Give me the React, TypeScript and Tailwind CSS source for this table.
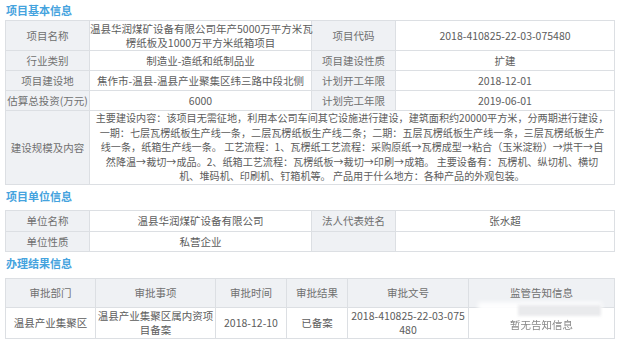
import React from "react";

const font = { fontFamily: '"Noto Sans CJK SC", "Liberation Sans", sans-serif' };

function Title({ text, top }: { text: string; top: string }) {
  return (
    <div className={`${top} h-[20px] leading-[15px] pl-[1px] text-[11px] font-bold text-[#45a3de]`}>
      {text}
    </div>
  );
}

const lab = "bg-[#eff1f4] border border-[#dcdfe3] text-center p-0 text-[#707070] whitespace-nowrap";
const val = "bg-white border border-[#dcdfe3] text-center p-0 text-[#5c5c5c]";

const scale = [
  "主要建设内容：该项目无需征地，利用本公司车间其它设施进行建设，建筑面积约20000平方米，分两期进行建设，",
  "一期：七层瓦楞纸板生产线一条，二层瓦楞纸板生产线二条；二期：五层瓦楞纸板生产线一条，三层瓦楞纸板生产",
  "线一条，纸箱生产线一条。 工艺流程：1、瓦楞纸工艺流程：采购原纸→瓦楞成型→粘合（玉米淀粉）→烘干→自",
  "然降温→裁切→成品。2、纸箱工艺流程：瓦楞纸板→裁切→印刷→成箱。 主要设备有：瓦楞机、纵切机、横切",
  "机、堆码机、印刷机、钉箱机等。 产品用于什么地方：各种产品的外观包装。",
];

export default function App() {
  return (
    <div className="w-[620px] h-[344px] bg-white overflow-hidden px-[5px] text-[10.5px]" style={font}>
      <Title text="项目基本信息" top="pt-[3px]" />
      <table className="w-[609px] table-fixed border-collapse leading-[14px]">
        <colgroup>
          <col className="w-[84px]" />
          <col className="w-[222px]" />
          <col className="w-[84px]" />
          <col className="w-[219px]" />
        </colgroup>
        <tbody>
          <tr className="h-[30px]">
            <td className={lab}>项目名称</td>
            <td className={val + " whitespace-nowrap"}>
              温县华润煤矿设备有限公司年产5000万平方米瓦
              <br />
              楞纸板及1000万平方米纸箱项目
            </td>
            <td className={lab}>项目代码</td>
            <td className={val}>2018-410825-22-03-075480</td>
          </tr>
          <tr className="h-[20px]">
            <td className={lab}>行业类别</td>
            <td className={val}>制造业-造纸和纸制品业</td>
            <td className={lab}>项目建设性质</td>
            <td className={val}>扩建</td>
          </tr>
          <tr className="h-[20px]">
            <td className={lab}>项目建设地</td>
            <td className={val + " whitespace-nowrap"}>焦作市-温县-温县产业聚集区纬三路中段北侧</td>
            <td className={lab}>计划开工年限</td>
            <td className={val}>2018-12-01</td>
          </tr>
          <tr className="h-[20px]">
            <td className={lab}>估算总投资(万元)</td>
            <td className={val}>6000</td>
            <td className={lab}>计划完工年限</td>
            <td className={val}>2019-06-01</td>
          </tr>
          <tr className="h-[74px]">
            <td className={lab}>建设规模及内容</td>
            <td colSpan={3} className={val + " whitespace-nowrap leading-[14.6px] text-[10.1px]"}>
              {scale.map((l, i) => (
                <div key={i}>{l}</div>
              ))}
            </td>
          </tr>
        </tbody>
      </table>

      <Title text="项目单位信息" top="pt-[4px] h-[25px]" />
      <table className="w-[609px] table-fixed border-collapse leading-[14px]">
        <colgroup>
          <col className="w-[84px]" />
          <col className="w-[222px]" />
          <col className="w-[84px]" />
          <col className="w-[219px]" />
        </colgroup>
        <tbody>
          <tr className="h-[21px]">
            <td className={lab}>单位名称</td>
            <td className={val}>温县华润煤矿设备有限公司</td>
            <td className={lab}>法人代表姓名</td>
            <td className={val}>张水超</td>
          </tr>
          <tr className="h-[20px]">
            <td className={lab}>单位性质</td>
            <td className={val}>私营企业</td>
            <td className={lab}></td>
            <td className={val}></td>
          </tr>
        </tbody>
      </table>

      <Title text="办理结果信息" top="pt-[4px] h-[26px]" />
      <table className="w-[609px] table-fixed border-collapse leading-[14px]">
        <colgroup>
          <col className="w-[90px]" />
          <col className="w-[120px]" />
          <col className="w-[71px]" />
          <col className="w-[61px]" />
          <col className="w-[121px]" />
          <col className="w-[146px]" />
        </colgroup>
        <tbody>
          <tr className="h-[29px]">
            <td className={lab}>审批部门</td>
            <td className={lab}>审批事项</td>
            <td className={lab}>审批时间</td>
            <td className={lab}>审批结果</td>
            <td className={lab}>审批文号</td>
            <td className={lab}>监管告知信息</td>
          </tr>
          <tr className="h-[31px]">
            <td className={val + " whitespace-nowrap"}>温县产业集聚区</td>
            <td className={val}>温县产业集聚区属内资项目备案</td>
            <td className={val}>2018-12-10</td>
            <td className={val}>已备案</td>
            <td className={val + " whitespace-nowrap"}>
              2018-410825-22-03-075
              <br />
              480
            </td>
            <td className={val + " relative text-[#888]"}>
              <div className="absolute left-[9px] top-[-6px] w-[124px] h-[17px] bg-white/90 blur-[2px]" />
              <div className="absolute left-[49px] top-[-3px] w-[83px] h-[11px] bg-[#e9eaec] blur-[1.5px]" />
              <span className="relative top-[2px] blur-[0.4px]">暂无告知信息</span>
            </td>
          </tr>
        </tbody>
      </table>
    </div>
  );
}
